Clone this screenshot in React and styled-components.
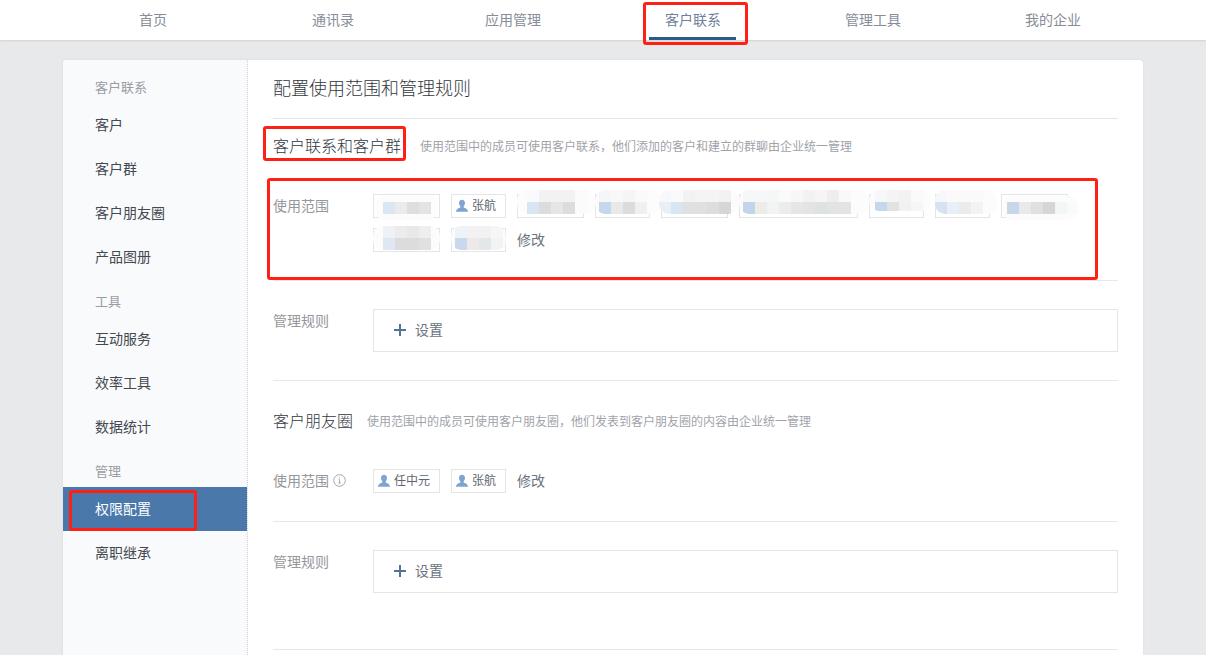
import React from 'react';
import styled, { createGlobalStyle } from 'styled-components';

const GlobalStyle = createGlobalStyle`
  html, body {
    margin: 0;
    padding: 0;
    height: 100%;
    overflow: hidden;
    background: #e8e9eb;
    font-family: "Noto Sans CJK SC", "Liberation Sans", sans-serif;
  }
`;

const TopNav = styled.div`
  height: 40px;
  background: #fff;
  box-shadow: 0 1px 2px rgba(0, 0, 0, 0.1);
  display: flex;
  justify-content: center;
`;

const NavItem = styled.div`
  position: relative;
  width: 180px;
  text-align: center;
  font-size: 14px;
  line-height: 38px;
  color: ${(p) => (p.$active ? '#6f7f9c' : '#878d99')};
`;

const NavBar = styled.span`
  position: absolute;
  left: 46px;
  bottom: 0;
  width: 87px;
  height: 3px;
  background: #2f5a85;
`;

const Mark = styled.span`
  position: absolute;
  top: ${(p) => p.$top}px;
  left: ${(p) => p.$left}px;
  width: ${(p) => p.$w}px;
  height: ${(p) => p.$h}px;
  box-sizing: border-box;
  border: 3px solid #fe2015;
  border-radius: 3px;
  pointer-events: none;
  z-index: 3;
`;

const Card = styled.div`
  width: 1080px;
  height: 595px;
  margin: 20px auto 0;
  background: #fff;
  border-radius: 4px 4px 0 0;
  box-shadow: 0 0 3px rgba(0, 0, 0, 0.06);
  display: flex;
  overflow: hidden;
`;

const Side = styled.div`
  width: 184px;
  flex: none;
  padding-top: 5px;
  background: #f9fafc;
  border-right: 1px dotted #cfd3d9;
`;

const SideTitle = styled.div`
  padding: 12px 0 6px 32px;
  font-size: 13px;
  line-height: 20px;
  color: #9a9da3;
`;

const SideItem = styled.div`
  position: relative;
  height: 44px;
  padding-left: 32px;
  font-size: 14px;
  line-height: 42px;
  color: ${(p) => (p.$active ? '#fff' : '#44484f')};
  background: ${(p) => (p.$active ? '#4a78ab' : 'transparent')};
`;

const Main = styled.div`
  flex: 1;
  padding: 0 25px;
  min-width: 0;
`;

const Heading = styled.div`
  padding: 15px 0 19px;
  font-size: 18px;
  font-weight: 300;
  line-height: 24px;
  color: #33373d;
  border-bottom: 1px solid #e2e4e8;
`;

const SectionHead = styled.div`
  display: flex;
  align-items: center;
  padding: ${(p) => (p.$later ? 27 : 14)}px 0 14px;
`;

const SectionTitle = styled.div`
  position: relative;
  padding-bottom: 2px;
  font-size: 16px;
  font-weight: 300;
  line-height: 24px;
  color: #33373d;
`;

const SectionNote = styled.div`
  margin-left: ${(p) => p.$gap}px;
  font-size: 12px;
  line-height: 26px;
  color: #a0a3a9;
`;

const Row = styled.div`
  position: relative;
  display: flex;
  padding: ${(p) => p.$top}px 0 ${(p) => p.$bottom}px;
  border-bottom: 1px solid #e7e8ea;
`;

const Label = styled.div`
  width: 100px;
  flex: none;
  box-sizing: border-box;
  display: flex;
  align-items: center;
  gap: 4px;
  height: 24px;
  padding-bottom: 2px;
  font-size: 14px;
  line-height: 22px;
  color: #94979c;
`;

const Chips = styled.div`
  flex: 1;
  display: flex;
  flex-wrap: wrap;
  gap: 10px 11px;
`;

const Chip = styled.div`
  position: relative;
  box-sizing: border-box;
  width: ${(p) => p.$w}px;
  height: 24px;
  padding-left: 3px;
  display: flex;
  align-items: center;
  gap: 3px;
  border: 1px solid #e4e5e7;
  font-size: 12px;
  color: #5f6670;
`;

const ChipName = styled.span`
  padding-bottom: 2px;
  line-height: 18px;
`;

const Mosaic = styled.div`
  position: absolute;
  z-index: 1;
  top: ${(p) => p.$top}px;
  left: ${(p) => p.$left}px;
  width: ${(p) => p.$w}px;
  height: ${(p) => p.$h}px;
  padding: ${(p) => p.$padTop || 0}px 0 0 ${(p) => p.$pad}px;
  box-sizing: border-box;
  background: rgba(252, 252, 252, 0.96);
  border-radius: 10px;
  overflow: hidden;
`;

const MosaicRow = styled.div`
  display: flex;
  height: 12px;
`;

const Cell = styled.span`
  width: 12px;
  height: 12px;
  flex: none;
  background: ${(p) => p.$c};
`;

const EditLink = styled.div`
  height: 24px;
  font-size: 14px;
  line-height: 22px;
  color: #6b7380;
`;

const RuleBox = styled.div`
  flex: 1;
  box-sizing: border-box;
  height: 43px;
  padding: 0 0 1px 20px;
  display: flex;
  align-items: center;
  gap: 9px;
  border: 1px solid #e4e5e7;
  font-size: 14px;
  color: #6b7380;
`;

const RuleText = styled.span`
  padding-bottom: 2px;
  line-height: 20px;
`;

const Person = () => (
  <svg width="14" height="14" viewBox="0 0 14 14" fill="#7ea5d2">
    <path d="M7 .8c-1.9 0-3 1.4-3 3.3 0 1.3.5 2.5 1.3 3.2v1.1C4 9 1.2 9.6 1 12.8h12c-.2-3.2-3-3.8-4.3-4.4V7.3c.8-.7 1.3-1.9 1.3-3.2C10 2.2 8.9.8 7 .8z" />
  </svg>
);

const Plus = () => (
  <svg width="12" height="12" viewBox="0 0 12 12" stroke="#54719a" strokeWidth="2">
    <path d="M6 0v12M0 6h12" />
  </svg>
);

const InfoDot = () => (
  <svg width="13" height="13" viewBox="0 0 13 13" fill="none" stroke="#a2a5aa">
    <circle cx="6.5" cy="6.5" r="5.8" />
    <path d="M5.6 5.7h1v3.2M5.3 9h2.5" />
    <path d="M6.5 3.4v1" />
  </svg>
);

// pixelated names, rows of 12px blocks laid over the chip
const firstRow = [
  { w: 67, left: -1, top: -5, mw: 78, mh: 24, pad: 10, rows: [['#f9fafb', '#f2f2f2', '#f2f2f2', '#f2f2f2', '#fbfbfb'], ['#d9e5f3', '#dcdcdc', '#e6e6e6', '#dcdcdc', '#fbfbfb']] },
  { w: 55, left: -1, top: -5, mw: 66, mh: 24, pad: 4, rows: [['#f4f6f8', '#f8f8f8', '#f5f5f5', '#fafafa'], ['#c5d7ea', '#e9e9e9', '#dcdcdc', '#eef0f2']] },
  { w: 67, left: -3, top: -5, mw: 80, mh: 24, pad: 0, rows: [['#f7f8fa', '#fafafa', '#f2f2f2', '#f4f4f4', '#f4f4f4', '#f2f2f2'], ['#e9eff6', '#d9e5f3', '#e0e0e0', '#e0e0e0', '#ddd', '#d6d6d6']] },
  { w: 119, left: -1, top: -5, mw: 130, mh: 24, pad: 4, rows: [['#f5f7f9', '#f7f7f7', '#f5f6f6', '#fafafa', '#f7f7f7', '#f2f2f2', '#f5f5f5', '#eeeeee', '#f9f9f9'], ['#c2d5ea', '#eeece9', '#f1f3f5', '#ececec', '#e7e6e3', '#e2e4e6', '#dfe2e3', '#e3e3e3', '#e3e3e3']] },
  { w: 55, left: -1, top: -5, mw: 62, mh: 21, pad: 6, rows: [['#f5f7f9', '#f4f4f4', '#f2f2f2', '#fafafa'], ['#c5d7ea', '#e2e2e2', '#f1f1f1', '#f4f6f7']] },
  { w: 55, left: -1, top: -5, mw: 62, mh: 24, pad: 0, rows: [['#f6f8fa', '#fafafa', '#fafafa', '#fafafa'], ['#d6e2f1', '#e9eff6', '#ebebeb', '#f3f3f3']] },
  { w: 67, left: 0, top: 1, mw: 76, mh: 24, pad: 5, padTop: 6, rows: [['#c6d7e9', '#e9e9e9', '#e0e0e0', '#d6d6d6', '#f2f6f7', '#fafafa']] },
];

const secondRow = [
  { w: 67, left: -1, top: -3, mw: 67, mh: 24, pad: 10, rows: [['#eef2f7', '#ececec', '#e8e8e8', '#eeeeee'], ['#dfe7f3', '#dcdcdc', '#dcdcdc', '#e0e0e0']] },
  { w: 55, left: -1, top: -3, mw: 55, mh: 24, pad: 4, rows: [['#eef3f8', '#f3f1f1', '#f2f2f2', '#f6f6f6'], ['#c9d9ec', '#ede9e8', '#e4e7e7', '#f1f3f4']] },
];

const leadChip = { w: 67, left: 1, top: 1, mw: 63, mh: 24, pad: 8, padTop: 6, rows: [['#dce6f3', '#e9ebee', '#dedede', '#e4e4e4']] };

const NameChip = ({ w, name }) => (
  <Chip $w={w}>
    <Person />
    <ChipName>{name}</ChipName>
  </Chip>
);

const BlurChip = ({ item }) => (
  <Chip $w={item.w}>
    <Mosaic $top={item.top} $left={item.left} $w={item.mw} $h={item.mh} $pad={item.pad} $padTop={item.padTop}>
      {item.rows.map((cells, i) => (
        <MosaicRow key={i}>
          {cells.map((c, j) => <Cell key={j} $c={c} />)}
        </MosaicRow>
      ))}
    </Mosaic>
  </Chip>
);

const navs = ['首页', '通讯录', '应用管理', '客户联系', '管理工具', '我的企业'];

const App = () => (
  <>
    <GlobalStyle />
    <TopNav>
      {navs.map((n) => (
        <NavItem key={n} $active={n === '客户联系'}>
          {n}
          {n === '客户联系' && <NavBar />}
          {n === '客户联系' && <Mark $top={2} $left={40} $w={105} $h={43} />}
        </NavItem>
      ))}
    </TopNav>
    <Card>
      <Side>
        <SideTitle>客户联系</SideTitle>
        <SideItem>客户</SideItem>
        <SideItem>客户群</SideItem>
        <SideItem>客户朋友圈</SideItem>
        <SideItem>产品图册</SideItem>
        <SideTitle>工具</SideTitle>
        <SideItem>互动服务</SideItem>
        <SideItem>效率工具</SideItem>
        <SideItem>数据统计</SideItem>
        <SideTitle>管理</SideTitle>
        <SideItem $active>
          权限配置
          <Mark $top={3} $left={6} $w={128} $h={41} />
        </SideItem>
        <SideItem>离职继承</SideItem>
      </Side>
      <Main>
        <Heading>配置使用范围和管理规则</Heading>

        <SectionHead>
          <SectionTitle>
            客户联系和客户群
            <Mark $top={-7} $left={-10} $w={143} $h={35} />
          </SectionTitle>
          <SectionNote $gap={19}>使用范围中的成员可使用客户联系，他们添加的客户和建立的群聊由企业统一管理</SectionNote>
        </SectionHead>
        <Row $top={21} $bottom={28}>
          <Mark $top={5} $left={-6} $w={831} $h={102} />
          <Label>使用范围</Label>
          <Chips>
            <BlurChip item={leadChip} />
            <NameChip w={55} name="张航" />
            {firstRow.map((item, i) => <BlurChip key={i} item={item} />)}
            {secondRow.map((item, i) => <BlurChip key={i} item={item} />)}
            <EditLink>修改</EditLink>
          </Chips>
        </Row>
        <Row $top={28} $bottom={28}>
          <Label>管理规则</Label>
          <RuleBox><Plus /><RuleText>设置</RuleText></RuleBox>
        </Row>

        <SectionHead $later>
          <SectionTitle>客户朋友圈</SectionTitle>
          <SectionNote $gap={14}>使用范围中的成员可使用客户朋友圈，他们发表到客户朋友圈的内容由企业统一管理</SectionNote>
        </SectionHead>
        <Row $top={21} $bottom={28}>
          <Label>使用范围<InfoDot /></Label>
          <Chips>
            <NameChip w={67} name="任中元" />
            <NameChip w={55} name="张航" />
            <EditLink>修改</EditLink>
          </Chips>
        </Row>
        <Row $top={28} $bottom={56}>
          <Label>管理规则</Label>
          <RuleBox><Plus /><RuleText>设置</RuleText></RuleBox>
        </Row>
      </Main>
    </Card>
  </>
);

export default App;
